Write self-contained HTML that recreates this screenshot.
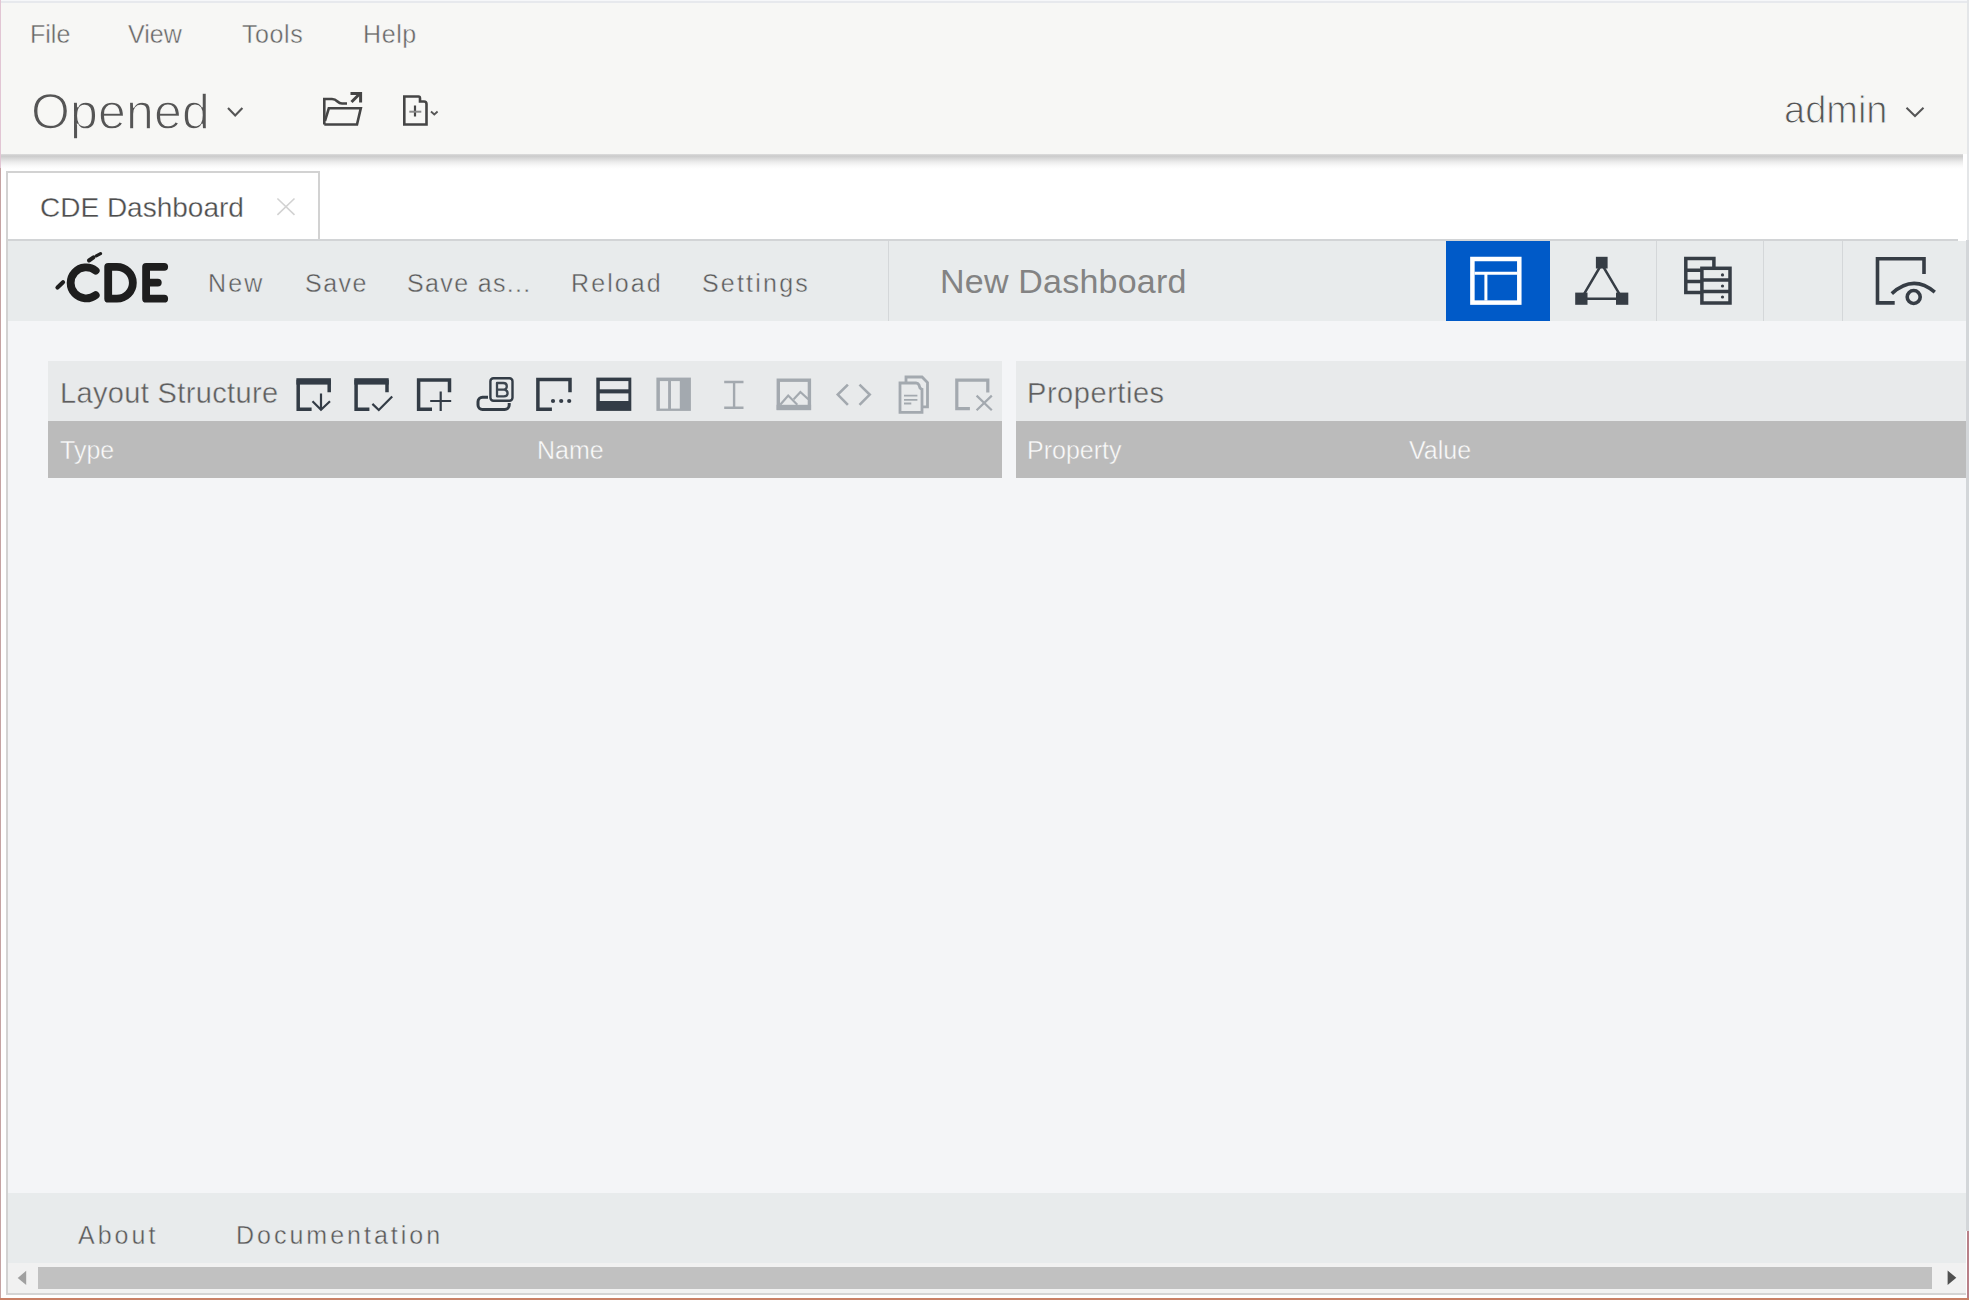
<!DOCTYPE html>
<html><head><meta charset="utf-8">
<style>
*{margin:0;padding:0;box-sizing:border-box;}
html,body{width:1969px;height:1300px;overflow:hidden;background:#ffffff;font-family:"Liberation Sans",sans-serif;}
.a{position:absolute;white-space:nowrap;}
#lb{left:0;top:0;width:1px;height:168px;background:#e2c6d4;}
#lb2{left:0;top:168px;width:1px;height:1132px;background:#c5a3a3;}
#bb{left:0;top:1298px;width:1969px;height:2px;background:#c98066;}
#rb{left:1966px;top:240px;width:3px;height:991px;background:#d3d6d9;}
#rbt{left:1967px;top:0;width:2px;height:240px;background:#e4e6e8;}
#rb2{left:1967px;top:1231px;width:2px;height:69px;background:#b98088;}
#topline{left:0;top:0;width:1969px;height:3px;background:linear-gradient(#f6f7f9 0px,#f6f7f9 1px,#e7e9ed 1px,#e7e9ed 3px);}
#menubar{left:1px;top:3px;width:1966px;height:151px;background:#f7f7f5;}
#shadow{left:1px;top:154px;width:1962px;height:15px;background:linear-gradient(#dddddd 0px,#cbcbcb 2px,#d6d6d6 4px,#ececec 8px,#fafafa 12px,#ffffff 15px);}
.menu{top:20px;font-size:25px;color:#666666;-webkit-text-stroke:0.4px #f7f7f5;}
.opened{left:31px;top:83px;font-size:50px;color:#555555;letter-spacing:0.2px;-webkit-text-stroke:1.3px #f7f7f5;}
.admin{left:1784px;top:89px;font-size:38px;color:#555555;-webkit-text-stroke:1px #f7f7f5;}
#tab{left:6px;top:171px;width:314px;height:70px;border:2px solid #d2d2d2;border-bottom:none;background:#fff;}
.tabt{left:40px;top:192px;font-size:28px;color:#4e4e4e;-webkit-text-stroke:0.3px #ffffff;}
#tbar{left:8px;top:239px;width:1950px;height:2px;background:#d2d4d6;}
#toolbar{left:8px;top:241px;width:1958px;height:80px;background:#e8ebec;}
.tb{top:269px;font-size:25px;color:#5c5c5c;letter-spacing:1.5px;-webkit-text-stroke:0.4px #e8ebec;}
.sep{top:241px;width:1px;height:80px;background:#d4d7d9;}
#main{left:8px;top:321px;width:1958px;height:872px;background:#f4f5f7;}
#lph{left:48px;top:361px;width:954px;height:60px;background:#e8eaeb;}
#lgh{left:48px;top:421px;width:954px;height:57px;background:#bbbbbb;}
#pph{left:1016px;top:361px;width:950px;height:60px;background:#e8eaeb;}
#pgh{left:1016px;top:421px;width:950px;height:57px;background:#bbbbbb;}
.ph{top:377px;font-size:29px;color:#5e5e5e;-webkit-text-stroke:0.4px #e8eaeb;}
.gh{top:436px;font-size:25px;color:#fafafa;-webkit-text-stroke:0.4px #bbbbbb;}
#footer{left:8px;top:1193px;width:1958px;height:70px;background:#e8ebec;}
.ft{top:1221px;font-size:25px;color:#585858;letter-spacing:3px;-webkit-text-stroke:0.4px #e8ebec;}
#scroll{left:8px;top:1263px;width:1958px;height:31px;background:#f1f1f1;}
#thumb{left:38px;top:1267px;width:1894px;height:22px;background:#c1c1c1;}
#sline{left:6px;top:1293px;width:1960px;height:2px;background:#d4d4d4;}
#lline{left:6px;top:240px;width:2px;height:1054px;background:#d2d2d2;}
</style></head>
<body>
<div class="a" id="topline"></div>
<div class="a" id="menubar"></div>
<div class="a" id="shadow"></div>
<div class="a" id="lb"></div>
<div class="a" id="lb2"></div>
<div class="a" id="rb"></div>
<div class="a" id="rbt"></div>
<div class="a" id="rb2"></div>

<div class="a menu" style="left:30px;">File</div>
<div class="a menu" style="left:128px;">View</div>
<div class="a menu" style="left:242px;letter-spacing:0.6px;">Tools</div>
<div class="a menu" style="left:363px;letter-spacing:0.6px;">Help</div>

<div class="a opened">Opened</div>
<div class="a admin">admin</div>

<div class="a" id="tab"></div>
<div class="a tabt">CDE Dashboard</div>

<div class="a" id="tbar"></div>
<div class="a" id="toolbar"></div>
<div class="a tb" style="left:208px;letter-spacing:2.2px;">New</div>
<div class="a tb" style="left:305px;">Save</div>
<div class="a tb" style="left:407px;letter-spacing:1.35px;">Save as...</div>
<div class="a tb" style="left:571px;letter-spacing:2.1px;">Reload</div>
<div class="a tb" style="left:702px;letter-spacing:2.2px;">Settings</div>
<div class="a sep" style="left:888px;"></div>
<div class="a" style="left:940px;top:262px;font-size:34px;color:#838383;letter-spacing:0.22px;">New Dashboard</div>
<div class="a" style="left:1446px;top:241px;width:104px;height:80px;background:#005ac8;"></div>
<div class="a sep" style="left:1656px;"></div>
<div class="a sep" style="left:1763px;"></div>
<div class="a sep" style="left:1842px;"></div>

<div class="a" id="main"></div>
<div class="a" id="lph"></div>
<div class="a" id="lgh"></div>
<div class="a" id="pph"></div>
<div class="a" id="pgh"></div>
<div class="a ph" style="left:60px;letter-spacing:0.35px;">Layout Structure</div>
<div class="a ph" style="left:1027px;letter-spacing:0.55px;">Properties</div>
<div class="a gh" style="left:60px;">Type</div>
<div class="a gh" style="left:537px;">Name</div>
<div class="a gh" style="left:1027px;">Property</div>
<div class="a gh" style="left:1409px;">Value</div>

<div class="a" id="footer"></div>
<div class="a ft" style="left:78px;">About</div>
<div class="a ft" style="left:236px;">Documentation</div>
<div class="a" id="scroll"></div>
<div class="a" id="thumb"></div>
<div class="a" id="sline"></div>
<div class="a" id="lline"></div>
<div class="a" id="bb"></div>
<svg class="a" style="left:0;top:0;" width="1969" height="1300" viewBox="0 0 1969 1300">
<!-- chevrons -->
<path d="M228 108 L235.2 115.5 L242.4 108" fill="none" stroke="#555" stroke-width="2.1"/>
<path d="M1906.5 107.8 L1915 116 L1923.5 107.8" fill="none" stroke="#555" stroke-width="2"/>
<!-- folder -->
<g fill="none" stroke="#454545" stroke-width="2.6" stroke-linejoin="miter">
<path d="M324.3 124.5 V99 H332 Q335 99 337.5 101.5 Q339.5 103.5 342 103.5 H347"/>
<path d="M324.3 124.5 H357 L360.8 108.3 H328.8 L325 121"/>
</g>
<path d="M351.5 102 L359.5 94" fill="none" stroke="#454545" stroke-width="3"/>
<path d="M350.5 93.6 H360.6 V102.6" fill="none" stroke="#454545" stroke-width="3"/>
<!-- new doc -->
<path d="M404.3 124.5 V96.5 H418.5 Q420 96.5 420 98.5 V101.5 H424 Q426.5 101.5 426.5 104 V124.5 Z" fill="none" stroke="#454545" stroke-width="2.6"/>
<path d="M415 105.5 V116.5" stroke="#454545" stroke-width="2.2"/>
<path d="M409.3 111.7 H421.3" stroke="#8a8a8a" stroke-width="2"/>
<path d="M431 111.5 L434.3 114.5 L437.6 111.5" fill="none" stroke="#555" stroke-width="1.8"/>
<!-- CDE logo -->
<g fill="none" stroke="#1e1e1e" stroke-width="7.8" stroke-linecap="round" stroke-linejoin="round">
<path d="M95.7 270.7 A15.5 15.5 0 1 0 95.7 295.1"/>
<path d="M108.2 266.8 V298.7 H116.9 A15.95 15.95 0 0 0 116.9 266.8 Z"/>
<path d="M164.2 266.8 H146.1 V298.7 H164.2 M146.1 282.6 H157.8"/>
</g>
<g stroke="#1e1e1e" stroke-linecap="round">
<path d="M57.5 287.5 L63 282.3" stroke-width="4.2"/>
<path d="M89 260.5 L93.5 257.3" stroke-width="4"/>
<path d="M96.3 255.8 L100.5 253.6" stroke-width="3.2"/>
</g>
<!-- layout icon -->
<g fill="none" stroke="#ffffff">
<rect x="1472.4" y="259" width="46.9" height="43.6" stroke-width="4.5"/>
<path d="M1474.5 273.2 H1517.2 M1485.9 273.2 V300.6" stroke-width="3"/>
</g>
<!-- components triangle -->
<g fill="#363d45">
<rect x="1595.9" y="256.8" width="11.7" height="11.7"/>
<rect x="1575.2" y="292.6" width="12.3" height="12.2"/>
<rect x="1616" y="292.6" width="12.3" height="12.2"/>
</g>
<path d="M1601.7 264 L1581.3 298.7 H1622.2 Z" fill="none" stroke="#363d45" stroke-width="2.5"/>
<!-- datasources -->
<g fill="none" stroke="#363d45" stroke-width="3.5">
<path d="M1701.9 292.4 H1685.8 V258.6 H1713.9 V268.3"/>
<path d="M1685.8 270.3 H1701.9 M1685.8 281.6 H1701.9"/>
<rect x="1701.9" y="268.3" width="28.1" height="34.7"/>
<path d="M1701.9 279.9 H1730 M1701.9 291.4 H1730"/>
</g>
<g fill="#363d45">
<circle cx="1722.5" cy="274.9" r="1.6"/>
<circle cx="1722.5" cy="286" r="1.6"/>
<circle cx="1722.5" cy="297" r="1.6"/>
</g>
<!-- preview -->
<g fill="none" stroke="#363d45" stroke-width="3.6">
<path d="M1894.7 302.9 H1877.5 V258.7 H1924 V273.9"/>
<path d="M1891.8 293.6 Q1913.3 274 1934.8 292.2"/>
<circle cx="1913.7" cy="297" r="6.5"/>
</g>
<!-- layout structure icons -->
<g fill="none" stroke="#333c46" stroke-width="3.5">
<path d="M311.6 409.2 H298.2 V381.4 H329.2 V392.2"/>
<path d="M369.4 409.2 H356.1 V381.4 H387 V392.2"/>
<path d="M432 409.2 H418.6 V379.9 H449.5 V392.2"/>
<path d="M551.9 409.2 H537.9 V379.4 H570 V392.2"/>
</g>
<g fill="#333c46">
<rect x="296.4" y="378.2" width="34.5" height="6.4"/>
<rect x="354.3" y="378.2" width="34.4" height="6.4"/>
</g>
<g fill="none" stroke="#333c46" stroke-width="2.2">
<path d="M321 393.4 V409.5 M312.5 401.3 L321 409.8 L330 401.3"/>
<path d="M372.4 403.9 L378.8 410 L392.2 396.5"/>
<path d="M440.7 391.6 V410.9 M430.2 401 H451.2"/>
</g>
<!-- B icon -->
<g fill="none" stroke="#333c46">
<rect x="478" y="397.3" width="31.2" height="12.2" rx="4.5" stroke-width="3"/>
</g>
<rect x="488" y="376" width="26.5" height="27" rx="3.5" fill="#e8eaeb"/>
<rect x="490.4" y="378.2" width="22.1" height="22.6" rx="3" fill="none" stroke="#333c46" stroke-width="2.4"/>
<path d="M497 383 H503.3 Q506.8 383 506.8 386.3 Q506.8 388.8 504.6 389.6 Q507.6 390.4 507.6 393.2 Q507.6 396.3 503.8 396.3 H497 Z M497 389.6 H504.2" fill="none" stroke="#3d4650" stroke-width="2.3" stroke-linejoin="round"/>
<g fill="#333c46">
<circle cx="553" cy="401" r="2.1"/><circle cx="561.2" cy="401" r="2.1"/><circle cx="569.2" cy="401" r="2.1"/>
</g>
<!-- rows -->
<rect x="596.3" y="377.6" width="35" height="33.3" fill="#333c46"/>
<rect x="599.8" y="381.1" width="28.6" height="8.2" fill="#e8eaeb"/>
<rect x="599.8" y="393.4" width="28.6" height="7.6" fill="#e8eaeb"/>
<!-- columns (gray) -->
<rect x="656.4" y="377.6" width="34.5" height="33.3" fill="#a3a9af"/>
<rect x="659.9" y="381.1" width="8.2" height="27.5" fill="#e8eaeb"/>
<rect x="671" y="381.1" width="8.8" height="27.5" fill="#e8eaeb"/>
<g fill="none" stroke="#a3a9af" stroke-width="2.4">
<path d="M724.2 382 H743.5 M724.2 407.7 H743.5 M734.1 382 V407.7"/>
</g>
<!-- image -->
<g fill="none" stroke="#a3a9af">
<rect x="778.3" y="380.2" width="31.1" height="28" stroke-width="3.4"/>
<path d="M780.2 404.8 L788.2 395.6 L797.3 404.8 M793.7 399.3 L800.4 392 L808.3 399.3" stroke-width="2.2"/>
</g>
<rect x="776.6" y="404.8" width="34.5" height="5.4" fill="#a3a9af"/>
<g fill="none" stroke="#a3a9af" stroke-width="2.6">
<path d="M847.9 384.6 L837.8 394.6 L847.9 404.8 M859.5 384.6 L869.7 394.6 L859.5 404.8"/>
</g>
<!-- copy -->
<g fill="none" stroke="#a3a9af" stroke-width="2.8">
<path d="M906 383 V377 H922 L927.5 382.5 V406.9 H922.5"/>
<path d="M900 412.4 V383 H916 Q918 383 919 385 L920 388 Q921 389 922 389.3 V412.4 Z"/>
</g>
<path d="M904 395.6 H917.4 M904 399.9 H917.4 M904 403.5 H911.3" stroke="#a3a9af" stroke-width="1.8"/>
<!-- delete -->
<g fill="none" stroke="#a3a9af" stroke-width="3.2">
<path d="M969.9 408.6 H956.8 V380.1 H987.8 V392.6"/>
</g>
<path d="M976.6 395.6 L991.8 410.2 M991.8 395.6 L976.6 410.2" stroke="#a3a9af" stroke-width="2.2"/>
<!-- scroll arrows -->
<path d="M17.7 1278 L26.2 1270.8 V1285 Z" fill="#a0a0a0"/>
<path d="M1956.3 1277.8 L1947.6 1270.5 V1285 Z" fill="#505050"/>
<!-- tab close -->
<path d="M277.4 198.5 L294.5 214.8 M294.5 198.5 L277.4 214.8" stroke="#d2d2d2" stroke-width="1.6"/>
</svg>
</body></html>
